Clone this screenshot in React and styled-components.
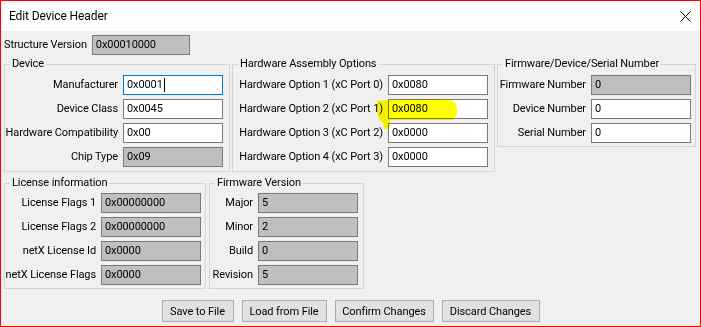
import styled, { createGlobalStyle } from 'styled-components';

const GlobalStyle = createGlobalStyle`
  html, body {
    margin: 0;
    padding: 0;
    background: #ffffff;
  }
  body {
    font-family: Roboto, "Liberation Sans", sans-serif;
    font-size: 11px;
    letter-spacing: -0.1px;
    color: #000000;
  }
`;

const Window = styled.div`
  position: relative;
  width: 701px;
  height: 327px;
  box-sizing: border-box;
  border: 1px solid #ff0000;
  background: #f0f0f0;
  display: flex;
  flex-direction: column;
  overflow: hidden;
`;

const TitleBar = styled.div`
  height: 30px;
  flex: none;
  background: #ffffff;
  display: flex;
  align-items: center;
  justify-content: space-between;
  padding: 0 9px 0 8px;
`;

const Title = styled.span`
  font-size: 12px;
`;

const Body = styled.div`
  flex: 1;
  padding: 4px 0 0 3px;
  display: flex;
  flex-direction: column;
`;

const TopRow = styled.div`
  display: flex;
  align-items: center;
  gap: 5px;
  height: 20px;
  margin-bottom: 1px;
`;

const Label = styled.span`
  line-height: 20px;
  white-space: nowrap;
  justify-self: end;
`;

const TextBox = styled.div`
  box-sizing: border-box;
  width: ${p => p.$w || 100}px;
  height: 20px;
  border: 1px solid ${p => (p.$focused ? '#0078d7' : '#7a7a7a')};
  background: ${p => (p.$readOnly ? '#bfbfbf' : '#ffffff')};
  padding-left: 3px;
  line-height: 18px;
  white-space: nowrap;
  display: flex;
  align-items: center;
`;

const Caret = styled.span`
  display: inline-block;
  width: 1px;
  height: 14px;
  margin-left: 1px;
  background: #000000;
`;

const GroupRow = styled.div`
  display: flex;
  gap: ${p => p.$gap || 2}px;
  margin-top: ${p => p.$mt || 0}px;
`;

const Group = styled.fieldset`
  box-sizing: border-box;
  width: ${p => p.$w}px;
  flex: none;
  margin: 0;
  min-width: 0;
  padding: ${p => p.$pt || 3}px ${p => p.$pr || 5}px ${p => p.$pb || 4}px 3px;
  border: 1px solid #d5d5d5;
  align-self: ${p => (p.$short ? 'flex-start' : 'stretch')};
`;

const Legend = styled.legend`
  padding: 0 2px;
  margin-left: 2px;
  line-height: 16px;
`;

const Rows = styled.div`
  display: grid;
  grid-template-columns: minmax(0, 1fr) 100px;
  column-gap: 5px;
  row-gap: 4px;
  align-items: center;
`;

const ButtonBar = styled.div`
  display: flex;
  justify-content: center;
  gap: 8px;
  margin-top: 11px;
  padding-right: 3px;
`;

const Button = styled.button`
  box-sizing: border-box;
  width: ${p => p.$w}px;
  height: 22px;
  padding: 0;
  border: 1px solid #adadad;
  background: #e1e1e1;
  font-family: inherit;
  font-size: 11px;
  letter-spacing: -0.1px;
  color: #000000;
`;

const Highlight = styled.svg`
  position: absolute;
  left: 373px;
  top: 97px;
  mix-blend-mode: multiply;
  pointer-events: none;
`;

function CloseIcon() {
  return (
    <svg width="11" height="11" viewBox="0 0 11 11">
      <path d="M0.5 0.5 L10.5 10.5 M10.5 0.5 L0.5 10.5" stroke="#000" strokeWidth="1" />
    </svg>
  );
}

function Field({ label, value, readOnly, focused, w }) {
  return (
    <>
      <Label>{label}</Label>
      <TextBox $readOnly={readOnly} $focused={focused} $w={w}>
        {value}
        {focused && <Caret />}
      </TextBox>
    </>
  );
}

export default function App() {
  return (
    <>
      <GlobalStyle />
      <Window>
        <TitleBar>
          <Title>Edit Device Header</Title>
          <CloseIcon />
        </TitleBar>
        <Body>
          <TopRow>
            <Label>Structure Version</Label>
            <TextBox $readOnly $w={98}>0x00010000</TextBox>
          </TopRow>

          <GroupRow>
            <Group $w={226} $pr={6}>
              <Legend>Device</Legend>
              <Rows>
                <Field label="Manufacturer" value="0x0001" focused />
                <Field label="Device Class" value="0x0045" />
                <Field label="Hardware Compatibility" value="0x00" />
                <Field label="Chip Type" value="0x09" readOnly />
              </Rows>
            </Group>
            <Group $w={263} $pr={6}>
              <Legend>Hardware Assembly Options</Legend>
              <Rows>
                <Field label="Hardware Option 1 (xC Port 0)" value="0x0080" />
                <Field label="Hardware Option 2 (xC Port 1)" value="0x0080" />
                <Field label="Hardware Option 3 (xC Port 2)" value="0x0000" />
                <Field label="Hardware Option 4 (xC Port 3)" value="0x0000" />
              </Rows>
            </Group>
            <Group $w={199} $pr={4} $pb={3} $short>
              <Legend>Firmware/Device/Serial Number</Legend>
              <Rows>
                <Field label="Firmware Number" value="0" readOnly />
                <Field label="Device Number" value="0" />
                <Field label="Serial Number" value="0" />
              </Rows>
            </Group>
          </GroupRow>

          <GroupRow $mt={3} $gap={3}>
            <Group $w={202} $pt={2} $pb={3} $pr={4}>
              <Legend>License information</Legend>
              <Rows>
                <Field label="License Flags 1" value="0x00000000" readOnly />
                <Field label="License Flags 2" value="0x00000000" readOnly />
                <Field label="netX License Id" value="0x0000" readOnly />
                <Field label="netX License Flags" value="0x0000" readOnly />
              </Rows>
            </Group>
            <Group $w={155} $pt={2} $pb={3} $pr={5}>
              <Legend>Firmware Version</Legend>
              <Rows>
                <Field label="Major" value="5" readOnly />
                <Field label="Minor" value="2" readOnly />
                <Field label="Build" value="0" readOnly />
                <Field label="Revision" value="5" readOnly />
              </Rows>
            </Group>
          </GroupRow>

          <ButtonBar>
            <Button $w={72}>Save to File</Button>
            <Button $w={85}>Load from File</Button>
            <Button $w={99}>Confirm Changes</Button>
            <Button $w={98}>Discard Changes</Button>
          </ButtonBar>
        </Body>

        <Highlight width="88" height="34" viewBox="0 0 88 34">
          <path
            d="M3 3 C20 1 62 1 76 2 C85 3 86 20 77 22 L16 22 L15 31 L10 31 L9 24 C4 23 3 18 3 3 Z"
            fill="#ffff00"
          />
        </Highlight>
      </Window>
    </>
  );
}
